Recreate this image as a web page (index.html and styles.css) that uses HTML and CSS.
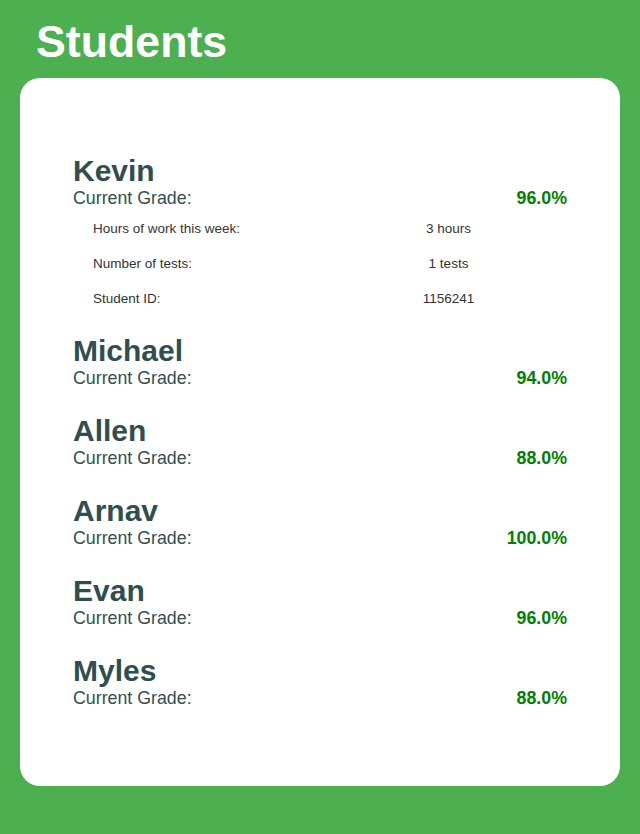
FILE: index.html
```html
<!DOCTYPE html>
<html lang="en">
<head>
<meta charset="utf-8">
<title>Students</title>
<link rel="stylesheet" href="styles.css">
</head>
<body>
<h1 class="title">Students</h1>
<main class="card">
  <section class="student">
    <h2 class="name">Kevin</h2>
    <div class="grade-row"><span class="grade-label">Current Grade:</span><span class="grade">96.0%</span></div>
    <div class="details">
      <span class="d-label">Hours of work this week:</span><span class="d-value">3 hours</span>
      <span class="d-label">Number of tests:</span><span class="d-value">1 tests</span>
      <span class="d-label">Student ID:</span><span class="d-value">1156241</span>
    </div>
  </section>
  <section class="student">
    <h2 class="name">Michael</h2>
    <div class="grade-row"><span class="grade-label">Current Grade:</span><span class="grade">94.0%</span></div>
  </section>
  <section class="student">
    <h2 class="name">Allen</h2>
    <div class="grade-row"><span class="grade-label">Current Grade:</span><span class="grade">88.0%</span></div>
  </section>
  <section class="student">
    <h2 class="name">Arnav</h2>
    <div class="grade-row"><span class="grade-label">Current Grade:</span><span class="grade">100.0%</span></div>
  </section>
  <section class="student">
    <h2 class="name">Evan</h2>
    <div class="grade-row"><span class="grade-label">Current Grade:</span><span class="grade">96.0%</span></div>
  </section>
  <section class="student">
    <h2 class="name">Myles</h2>
    <div class="grade-row"><span class="grade-label">Current Grade:</span><span class="grade">88.0%</span></div>
  </section>
</main>
</body>
</html>
```
FILE: styles.css
```css
html, body {
  margin: 0;
  padding: 0;
}
body {
  background: #4caf50;
  font-family: "Liberation Sans", Arial, sans-serif;
  padding: 0 20px 48px;
  height: 834px;
  box-sizing: border-box;
}
.title {
  margin: 0;
  padding: 17px 0 0 16px;
  height: 78px;
  box-sizing: border-box;
  font-size: 44.7px;
  line-height: 50px;
  font-weight: bold;
  color: #ffffff;
}
.card {
  background: #ffffff;
  border-radius: 20px;
  height: 708px;
  box-sizing: border-box;
  padding: 77px 53px 0;
  display: flex;
  flex-direction: column;
  gap: 25px;
}
.student {
  display: flex;
  flex-direction: column;
}
.name {
  margin: 0;
  font-size: 30px;
  line-height: 31px;
  font-weight: bold;
  color: #2f4f4f;
}
.grade-row {
  display: flex;
  justify-content: space-between;
  font-size: 17.8px;
  line-height: 24px;
}
.grade-label {
  color: #2f4f4f;
}
.grade {
  color: #008000;
  font-weight: bold;
}
.details {
  margin: 7px 0 -1px 20px;
  display: grid;
  grid-template-columns: 1fr 1fr;
  row-gap: 11px;
  font-size: 13.5px;
  line-height: 24px;
  color: #333333;
}
.d-value {
  text-align: center;
}
```
